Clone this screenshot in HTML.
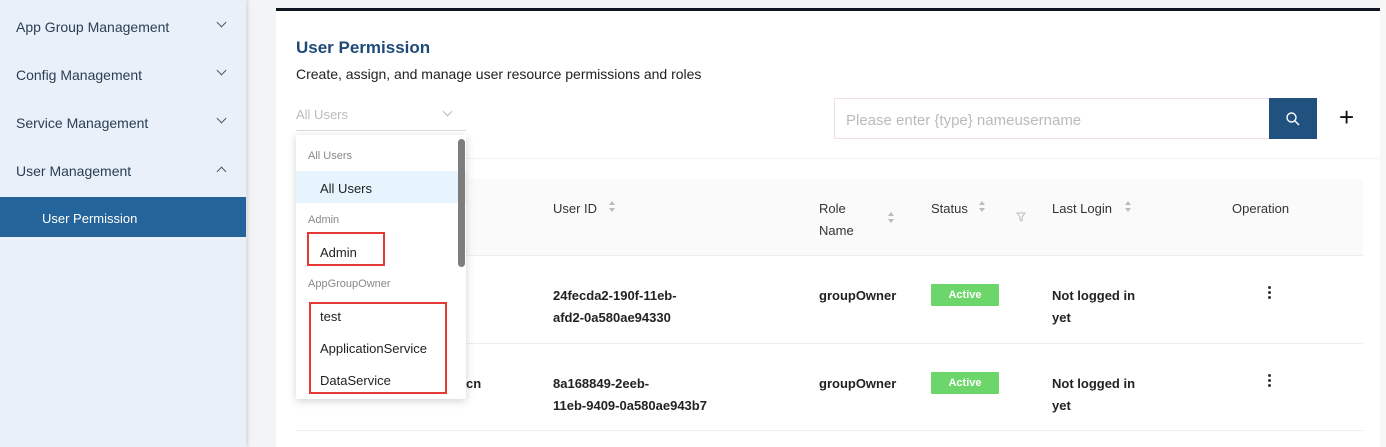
<!DOCTYPE html>
<html><head><meta charset="utf-8"><style>
*{box-sizing:border-box;margin:0;padding:0}
body{width:1386px;height:447px;overflow:hidden;background:#f3f4f6;font-family:"Liberation Sans","DejaVu Sans",sans-serif;position:relative;color:#333}
.side{position:absolute;left:0;top:0;width:246px;height:447px;background:#e9f0fa;box-shadow:2px 0 4px rgba(0,0,0,.12)}
.mi{position:absolute;left:16px;font-size:14px;color:#2a3e55}
.chev{position:absolute;left:218px;width:7px;height:7px;border-right:1.5px solid #555;border-bottom:1.5px solid #555;transform:rotate(45deg)}
.abs{position:absolute}
.card{position:absolute;left:276px;top:8px;width:1104px;height:439px;background:#fff;border-top:3px solid #0d1520}
.t{position:absolute;white-space:nowrap}
.hd{font-size:13px;color:#333}
.b{font-weight:bold;font-size:13px;color:#222}
.badge{position:absolute;width:68px;height:22px;background:#6cd66a;color:#fff;font-size:11px;font-weight:bold;text-align:center;line-height:22px;border-radius:1px}
.sort{position:absolute;width:6px;height:12px}
.sort:before{content:"";position:absolute;left:0;top:0;border:3px solid transparent;border-bottom:4px solid #bbb;border-top:0}
.sort:after{content:"";position:absolute;left:0;top:7px;border:3px solid transparent;border-top:4px solid #bbb;border-bottom:0}
.dd{position:absolute;left:296px;top:135px;width:170px;height:264px;background:#fff;box-shadow:0 2px 8px rgba(0,0,0,.18);overflow:hidden}
.g{position:absolute;left:12px;font-size:11px;color:#888}
.o{position:absolute;left:24px;font-size:13px;color:#222}
.red{position:absolute;border:2px solid #e53935}
.dots{position:absolute;width:3px;height:3px;background:#333;border-radius:50%;box-shadow:0 5px 0 #333,0 10px 0 #333}
</style></head><body>
<div class="side">
<div class="mi" style="top:19px">App Group Management</div><div class="chev" style="top:19px"></div>
<div class="mi" style="top:67px">Config Management</div><div class="chev" style="top:67px"></div>
<div class="mi" style="top:115px">Service Management</div><div class="chev" style="top:115px"></div>
<div class="mi" style="top:163px">User Management</div><div class="chev" style="top:168px;transform:rotate(-135deg)"></div>
<div class="abs" style="left:0;top:197px;width:246px;height:40px;background:#24649a;color:#fff;font-size:13px;padding:14px 0 0 42px">User Permission</div>
</div>
<div class="abs" style="left:1380px;top:0;width:6px;height:447px;background:#f7f7f7"></div>
<div class="card"></div>
<div class="t" style="left:296px;top:38px;font-size:17px;font-weight:bold;color:#1e4a78">User Permission</div>
<div class="t" style="left:296px;top:66px;font-size:14px;color:#222">Create, assign, and manage user resource permissions and roles</div>
<div class="t" style="left:296px;top:107px;font-size:13px;color:#bbb">All Users</div>
<div class="abs" style="left:444px;top:108px;width:7px;height:7px;border-right:1px solid #bbb;border-bottom:1px solid #bbb;transform:rotate(45deg)"></div>
<div class="abs" style="left:296px;top:130px;width:170px;height:1px;background:#ddd"></div>
<div class="abs" style="left:834px;top:98px;width:436px;height:41px;border:1px solid #f3dde6;background:#fff"></div>
<div class="t" style="left:846px;top:112px;font-size:15px;color:#bbb">Please enter {type} nameusername</div>
<div class="abs" style="left:1269px;top:98px;width:48px;height:41px;background:#21527f"></div>
<svg class="abs" style="left:1285px;top:111px" width="16" height="16" viewBox="0 0 16 16"><circle cx="6.5" cy="6.5" r="4.5" fill="none" stroke="#fff" stroke-width="1.4"/><path d="M10 10l4 4" stroke="#fff" stroke-width="1.4"/></svg>
<div class="t" style="left:1339px;top:102px;font-size:26px;color:#111;font-weight:300">+</div>
<div class="abs" style="left:296px;top:158px;width:1084px;height:1px;background:#f3f3f3"></div>
<div class="abs" style="left:296px;top:179px;width:1067px;height:77px;background:#fafafa;border-bottom:1px solid #eee"></div>
<div class="t hd" style="left:553px;top:201px">User ID</div><div class="sort" style="left:609px;top:201px"></div>
<div class="t hd" style="left:819px;top:201px">Role</div><div class="t hd" style="left:819px;top:223px">Name</div><div class="sort" style="left:888px;top:212px"></div>
<div class="t hd" style="left:931px;top:201px">Status</div><div class="sort" style="left:979px;top:201px"></div>
<svg class="abs" style="left:1016px;top:212px" width="10" height="10" viewBox="0 0 10 10"><path d="M1 1h8L6 5v4L4 8V5z" fill="none" stroke="#bbb"/></svg>
<div class="t hd" style="left:1052px;top:201px">Last Login</div><div class="sort" style="left:1125px;top:201px"></div>
<div class="t hd" style="left:1232px;top:201px">Operation</div>
<div class="t b" style="left:553px;top:288px">24fecda2-190f-11eb-</div><div class="t b" style="left:553px;top:310px">afd2-0a580ae94330</div>
<div class="t b" style="left:819px;top:288px">groupOwner</div>
<div class="badge" style="left:931px;top:284px">Active</div>
<div class="t b" style="left:1052px;top:288px">Not logged in</div><div class="t b" style="left:1052px;top:310px">yet</div>
<div class="dots" style="left:1268px;top:286px"></div>
<div class="abs" style="left:296px;top:343px;width:1067px;height:1px;background:#eee"></div>
<div class="t b" style="left:466px;top:376px">cn</div>
<div class="t b" style="left:553px;top:376px">8a168849-2eeb-</div><div class="t b" style="left:553px;top:398px">11eb-9409-0a580ae943b7</div>
<div class="t b" style="left:819px;top:376px">groupOwner</div>
<div class="badge" style="left:931px;top:372px">Active</div>
<div class="t b" style="left:1052px;top:376px">Not logged in</div><div class="t b" style="left:1052px;top:398px">yet</div>
<div class="dots" style="left:1268px;top:374px"></div>
<div class="abs" style="left:296px;top:430px;width:1067px;height:1px;background:#eee"></div>
<div class="dd">
<div class="g" style="top:15px">All Users</div>
<div class="abs" style="left:0;top:36px;width:170px;height:32px;background:#e6f4fd"></div>
<div class="o" style="top:46px">All Users</div>
<div class="g" style="top:79px">Admin</div>
<div class="o" style="top:110px">Admin</div>
<div class="g" style="top:143px">AppGroupOwner</div>
<div class="o" style="top:174px">test</div>
<div class="o" style="top:206px">ApplicationService</div>
<div class="o" style="top:238px">DataService</div>
<div class="abs" style="left:162px;top:4px;width:7px;height:128px;background:#7d7d7d;border-radius:4px"></div>
</div>
<div class="red" style="left:307px;top:232px;width:78px;height:34px"></div>
<div class="red" style="left:309px;top:302px;width:138px;height:92px"></div>
</body></html>
